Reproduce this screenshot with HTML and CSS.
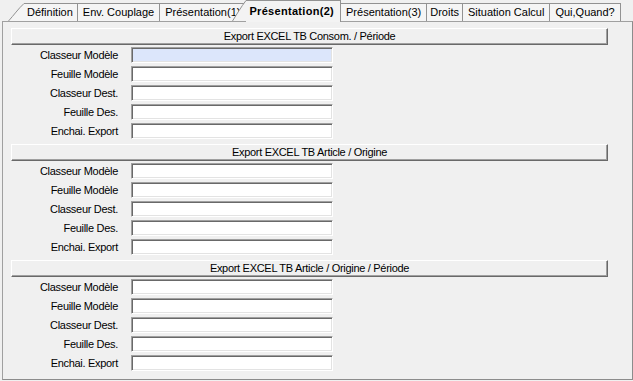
FILE: index.html
```html
<!DOCTYPE html>
<html>
<head>
	<meta http-equiv="Content-Type" content="text/html; charset=utf-8">
	<title>Présentation(2)</title>
	<link rel="stylesheet" href="styles.css">
</head>
<body>

	<div class="tabs">
		<div class="tab tab-first">
			<svg class="slant" width="16" height="18" viewBox="0 0 16 18"><path d="M0 18 C6 12 10 6 16 0.5 L16 18 Z" fill="#f5f5f5"/><path d="M0.5 18 C6 12 10 6 16 0.5" fill="none" stroke="#929292"/></svg>
			Définition
		</div>
		<div class="tab">Env. Couplage</div>
		<div class="tab">Présentation(1)</div>
		<div class="tab tab-active">
			<svg class="slant" width="14" height="21" viewBox="0 0 14 21"><path d="M0 21 C5 14 9 7 14 0.5 L14 21 Z" fill="#f3f3f3"/><path d="M0.5 21 C5 14 9 7 14 0.5" fill="none" stroke="#929292"/></svg>
			Présentation(2)
		</div>
		<div class="tab">Présentation(3)</div>
		<div class="tab tab-tight">Droits</div>
		<div class="tab">Situation Calcul</div>
		<div class="tab">Qui,Quand?</div>
	</div>

	<div class="panel">

		<div class="section">
			<div class="bar">Export EXCEL TB Consom. / Période</div>
			<p class="row"><label>Classeur Modèle</label><input type="text" class="focus" /></p>
			<p class="row"><label>Feuille Modèle</label><input type="text" /></p>
			<p class="row"><label>Classeur Dest.</label><input type="text" /></p>
			<p class="row"><label>Feuille Des.</label><input type="text" /></p>
			<p class="row"><label>Enchai. Export</label><input type="text" /></p>
		</div>

		<div class="section">
			<div class="bar">Export EXCEL TB Article / Origine</div>
			<p class="row"><label>Classeur Modèle</label><input type="text" /></p>
			<p class="row"><label>Feuille Modèle</label><input type="text" /></p>
			<p class="row"><label>Classeur Dest.</label><input type="text" /></p>
			<p class="row"><label>Feuille Des.</label><input type="text" /></p>
			<p class="row"><label>Enchai. Export</label><input type="text" /></p>
		</div>

		<div class="section">
			<div class="bar">Export EXCEL TB Article / Origine / Période</div>
			<p class="row"><label>Classeur Modèle</label><input type="text" /></p>
			<p class="row"><label>Feuille Modèle</label><input type="text" /></p>
			<p class="row"><label>Classeur Dest.</label><input type="text" /></p>
			<p class="row"><label>Feuille Des.</label><input type="text" /></p>
			<p class="row"><label>Enchai. Export</label><input type="text" /></p>
		</div>

	</div>

</body>
</html>
```

FILE: styles.css
```css
* {padding: 0; margin: 0; box-sizing: border-box;}
body {background: #f0f0f0; width: 633px; height: 381px; overflow: hidden; font-family: "Liberation Sans", Arial, sans-serif; font-size: 11px; color: #000; letter-spacing: -0.3px;}

.tabs {display: flex; align-items: flex-end; height: 21px; padding-left: 24px; position: relative; z-index: 1; letter-spacing: 0;}
.tab {position: relative; height: 18px; line-height: 17px; padding: 0 5px; background: #f5f5f5; border-top: 1px solid #929292; border-right: 1px solid #929292; white-space: nowrap;}
.tab-first {padding: 0 4px 0 3px;}
.tab-tight {padding: 0 3px;}
.tab-active {height: 22px; margin-bottom: -1px; padding: 2px 6px 0 3px; font-weight: bold; letter-spacing: 0.3px; background: #f3f3f3;}
.slant {position: absolute; bottom: 0; left: -16px; display: block;}
.tab-active .slant {left: -14px; bottom: 1px;}

.panel {margin-left: 2px; width: 631px; height: 359px; border: 1px solid #a0a0a0; border-right-color: #8c8c8c; border-bottom-color: #8c8c8c; padding: 6px 0 0 8px;}

.section {margin-bottom: 5px;}
.bar {width: 597px; height: 17px; line-height: 14px; text-align: center; background: #f0f0f0; border-top: 1px solid #fff; border-left: 1px solid #fff; border-right: 1px solid #696969; border-bottom: 1px solid #696969; box-shadow: inset -1px -1px #a0a0a0; margin-bottom: 2px;}

.row {display: flex; align-items: center; height: 16px; margin-bottom: 3px;}
.row label {width: 107px; margin-right: 13px; text-align: right;}
.row input {width: 202px; height: 16px; border: 1px solid; border-color: #a0a0a0 #fff #fff #a0a0a0; box-shadow: inset 1px 1px #696969, inset -1px -1px #e3e3e3; background: #fff; font-family: inherit; font-size: 11px; padding: 0 3px; outline: none;}
.row input.focus {background: #dce6fb;}
```
